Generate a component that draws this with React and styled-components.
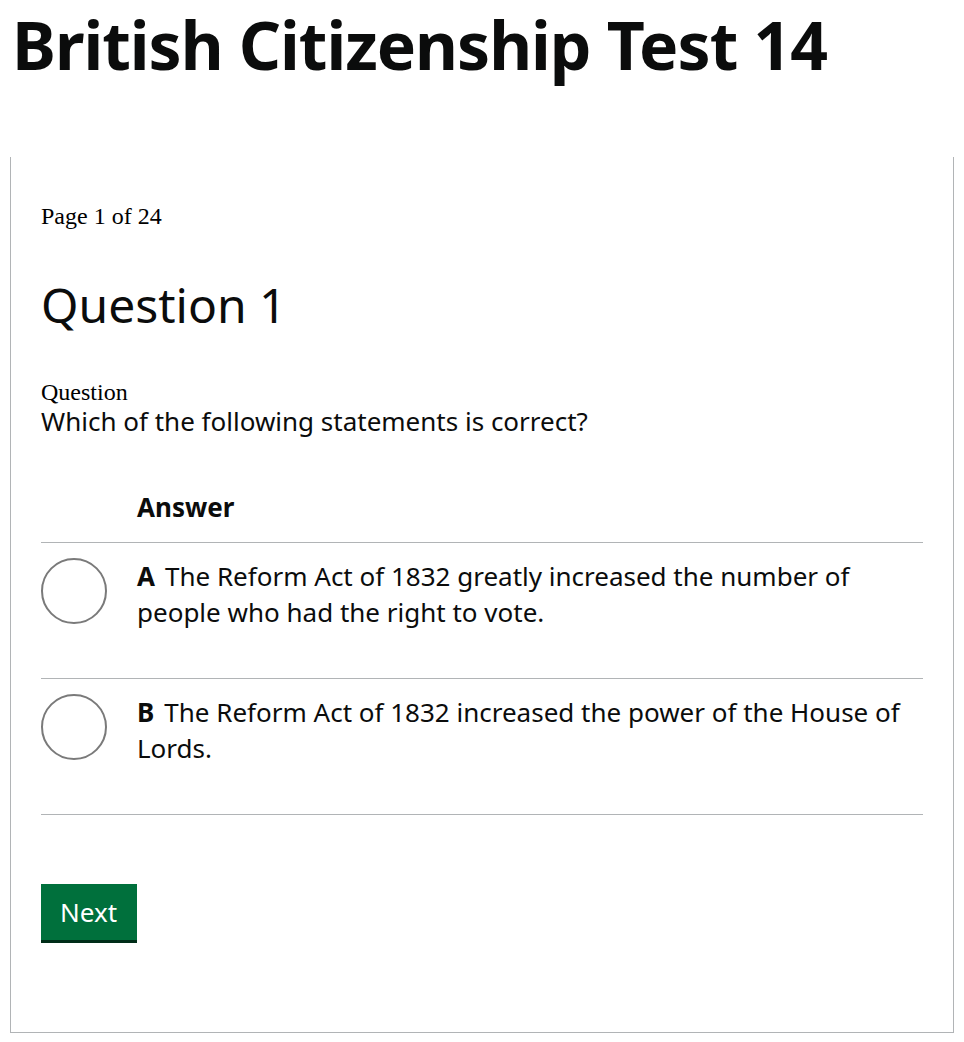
import React from 'react';
import styled, { createGlobalStyle } from 'styled-components';

const Global = createGlobalStyle`
  body {
    margin: 0;
    background: #fff;
    color: #0b0c0c;
    font-family: "Noto Sans", "Liberation Sans", sans-serif;
  }
`

const Page = styled.div`
  padding: 0 10px 9px 10px;
`

const Title = styled.h1`
  margin: 0;
  padding: 4px 0 0 2px;
  height: 157px;
  box-sizing: border-box;
  font-size: 66px;
  font-weight: 700;
  letter-spacing: -1px;
  line-height: 80px;
  color: #0b0c0c;
`

const Frame = styled.div`
  border: 1px solid #b1b4b6;
  border-top: none;
  padding: 44px 30px 92px 30px;
`

const Counter = styled.p`
  margin: 0;
  font-family: "Liberation Serif", "Times New Roman", serif;
  font-size: 24px;
  line-height: 30px;
  color: #000;
`

const Heading = styled.h2`
  margin: 46px 0 0 0;
  font-size: 48px;
  font-weight: 400;
  line-height: 56px;
`

const Label = styled.div`
  margin-top: 46px;
  font-family: "Liberation Serif", "Times New Roman", serif;
  font-size: 24px;
  line-height: 26px;
  color: #000;
`

const Prompt = styled.p`
  margin: 0;
  font-size: 26px;
  line-height: 32px;
`

const Answers = styled.div`
  margin-top: 54px;
`

const HeadRow = styled.div`
  display: grid;
  grid-template-columns: 96px 1fr;
  padding-bottom: 19px;
  border-bottom: 1px solid #b1b4b6;
  font-size: 26px;
  font-weight: 700;
  line-height: 32px;
`

const Row = styled.label`
  display: grid;
  grid-template-columns: 96px 1fr;
  height: 136px;
  box-sizing: border-box;
  padding-top: 14px;
  border-bottom: 1px solid #b1b4b6;
  cursor: pointer;
`

const Radio = styled.span`
  width: 62px;
  height: 62px;
  border: 2px solid #7a7a7a;
  border-radius: 50%;
  margin-top: 1px;
`

const Text = styled.div`
  font-size: 26px;
  line-height: 36px;
  padding-top: 1px;
`

const Key = styled.b`
  margin-right: 10px;
`

const Button = styled.button`
  margin-top: 69px;
  border: none;
  background: #00703c;
  color: #fff;
  font-family: inherit;
  font-size: 26px;
  line-height: 30px;
  padding: 13px 20px 13px 19px;
  box-shadow: 0 3px 0 #002d18;
  cursor: pointer;
`

const answers = [
  { key: 'A', text: 'The Reform Act of 1832 greatly increased the number of people who had the right to vote.' },
  { key: 'B', text: 'The Reform Act of 1832 increased the power of the House of Lords.' },
]

export default function App() {
  return <Page>
    <Global />
    <Title>British Citizenship Test 14</Title>
    <Frame>
      <Counter>Page 1 of 24</Counter>
      <Heading>Question 1</Heading>
      <Label>Question</Label>
      <Prompt>Which of the following statements is correct?</Prompt>
      <Answers>
        <HeadRow><span /><span>Answer</span></HeadRow>
        {answers.map(a => <Row key={a.key}>
          <Radio />
          <Text><Key>{a.key}</Key>{a.text}</Text>
        </Row>)}
      </Answers>
      <Button>Next</Button>
    </Frame>
  </Page>
}
